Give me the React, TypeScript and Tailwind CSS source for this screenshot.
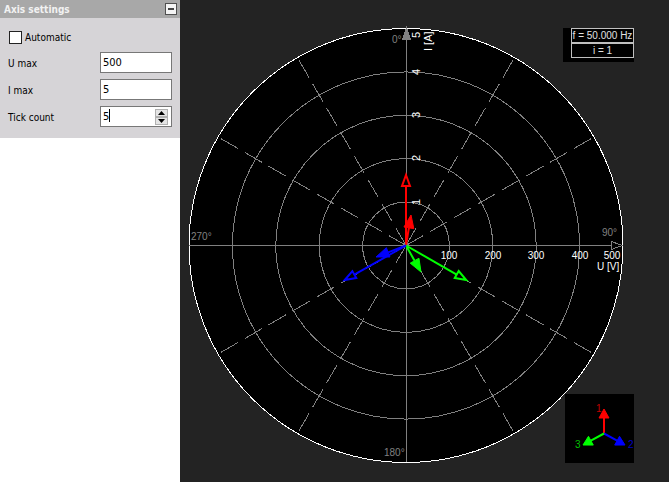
import { useState } from "react";

const CX = 226;
const CY = 245.5;
const RADIUS = 217;
const RINGS = [1, 2, 3, 4];
const SPOKES = [30, 60, 120, 150, 210, 240, 300, 330];

const VOLTAGE_TICKS = [
  { label: "100", x: 269 },
  { label: "200", x: 313 },
  { label: "300", x: 356 },
  { label: "400", x: 400 },
  { label: "500", x: 432 },
];

const CURRENT_TICKS = [
  { label: "1", y: 202 },
  { label: "2", y: 158 },
  { label: "3", y: 115 },
  { label: "4", y: 72 },
  { label: "5", y: 35 },
];

const PHASORS = [
  { id: "U1", x: 226, y: 173, color: "#ff0000", filled: false },
  { id: "I1", x: 231, y: 215, color: "#ff0000", filled: true },
  { id: "U2", x: 288, y: 281, color: "#00ff00", filled: false },
  { id: "I2", x: 241, y: 272, color: "#00ff00", filled: true },
  { id: "U3", x: 163, y: 281, color: "#0000ff", filled: false },
  { id: "I3", x: 196, y: 257, color: "#0000ff", filled: true },
];

type ArrowProps = {
  x1: number;
  y1: number;
  x2: number;
  y2: number;
  color: string;
  filled: boolean;
  head?: number;
};

function Arrow({ x1, y1, x2, y2, color, filled, head = 13 }: ArrowProps) {
  const len = Math.hypot(x2 - x1, y2 - y1);
  const dx = (x2 - x1) / len;
  const dy = (y2 - y1) / len;
  // an outlined head is pulled back so its mitred tip ends on the value
  const inset = filled ? 0 : 2;
  const tx = x2 - dx * inset;
  const ty = y2 - dy * inset;
  const bx = x2 - dx * head;
  const by = y2 - dy * head;
  const half = filled ? 5 : 4;
  return (
    <g stroke={color}>
      <line x1={x1} y1={y1} x2={bx} y2={by} strokeWidth={2} />
      <polygon
        points={`${tx},${ty} ${bx - dy * half},${by + dx * half} ${bx + dy * half},${by - dx * half}`}
        fill={filled ? color : "#000"}
        strokeWidth={filled ? 1 : 2}
      />
    </g>
  );
}

function PhasorChart() {
  return (
    <svg viewBox="0 0 489 482" className="block h-full w-full font-['Liberation_Sans',Arial,sans-serif]" role="img" aria-label="Phasor diagram">
      <g fill="none" stroke="#808080" shapeRendering="crispEdges">
        <circle cx={CX} cy={CY} r={RADIUS} fill="#000" stroke="#fff" />
        {RINGS.map((n) => (
          <circle key={n} cx={CX} cy={CY} r={(RADIUS * n) / 5} />
        ))}
        {SPOKES.map((deg) => {
          const a = (deg * Math.PI) / 180;
          return (
            <line
              key={deg}
              x1={CX + 214 * Math.sin(a)}
              y1={CY - 214 * Math.cos(a)}
              x2={CX}
              y2={CY}
              strokeDasharray="20 7.7"
            />
          );
        })}
        <path d="M226.5 29V462M9 245.5H442" />
        <polygon points="226.5,28 230.5,39.5 222.5,39.5" fill="#808080" />
        <polygon points="442,245.5 431.5,241.5 431.5,249.5" fill="#000" />
      </g>

      {PHASORS.map((p) => (
        <Arrow key={p.id} x1={226} y1={245.5} x2={p.x} y2={p.y} color={p.color} filled={p.filled} />
      ))}

      <g fill="#808080" fontSize={10}>
        <text x={212} y={43}>0°</text>
        <text x={422} y={236}>90°</text>
        <text x={204} y={456}>180°</text>
        <text x={11} y={240}>270°</text>
      </g>

      <g fill="#fff" fontSize={10}>
        {VOLTAGE_TICKS.map((t) => (
          <text key={t.label} textAnchor="middle" x={t.x} y={259}>{t.label}</text>
        ))}
        <text x={417} y={270}>U [V]</text>
      </g>
      <g fill="#fff" fontSize={11}>
        {CURRENT_TICKS.map((t) => (
          <text key={t.label} textAnchor="middle" transform={`translate(240 ${t.y}) rotate(-90)`}>{t.label}</text>
        ))}
        <text transform="translate(252 51) rotate(-90)">I [A]</text>
      </g>
    </svg>
  );
}

function PhaseLegend() {
  return (
    <svg viewBox="0 0 69 69" className="block size-[69px] bg-black font-['Liberation_Sans',Arial,sans-serif]" role="img" aria-label="Phase order">
      <Arrow x1={39} y1={39.5} x2={39} y2={15} color="#ff0000" filled head={9} />
      <Arrow x1={39} y1={39.5} x2={60} y2={51} color="#0000ff" filled head={9} />
      <Arrow x1={39} y1={39.5} x2={18} y2={51} color="#00ff00" filled head={9} />
      <g fontSize={10}>
        <text x={31} y={18} fill="#c00000">1</text>
        <text x={63} y={54} fill="#0000c8">2</text>
        <text x={10} y={54} fill="#00c000">3</text>
      </g>
    </svg>
  );
}

function AxisSettings() {
  const [open, setOpen] = useState(true);
  const [automatic, setAutomatic] = useState(false);
  const [uMax, setUMax] = useState("500");
  const [iMax, setIMax] = useState("5");
  const [ticks, setTicks] = useState(5);
  const field = "h-[21px] w-[72px] border border-[#777] bg-white px-[2px] pb-px text-[11px] outline-none";

  return (
    <section>
      <header className="flex h-[18px] items-center justify-between bg-[#a8a8a8] pr-[3px] pl-1">
        <h2 className="pt-px font-bold text-[#f2f2f2]">Axis settings</h2>
        <button
          type="button"
          aria-label="Collapse"
          onClick={() => setOpen(!open)}
          className="grid size-3 place-items-center border border-[#505050] bg-[#f4f4f4]"
        >
          <span className="h-[2px] w-1.5 bg-[#444]" />
        </button>
      </header>
      {open && (
        <div className="bg-[#d6d4d7] px-2 pt-[13px] pb-[11px]">
          <label className="flex h-[13px] items-center gap-[3px] pl-px">
            <input
              type="checkbox"
              checked={automatic}
              onChange={(e) => setAutomatic(e.target.checked)}
              className="size-[13px] appearance-none border border-[#222] bg-white checked:bg-[#444]"
            />
            <span className="pt-px">Automatic</span>
          </label>
          <div className="mt-2 flex flex-col gap-1.5">
            <div className="flex items-center justify-between">
              <label htmlFor="u-max" className="pt-0.5">U max</label>
              <input id="u-max" className={field} value={uMax} onChange={(e) => setUMax(e.target.value)} />
            </div>
            <div className="flex items-center justify-between">
              <label htmlFor="i-max" className="pt-0.5">I max</label>
              <input id="i-max" className={field} value={iMax} onChange={(e) => setIMax(e.target.value)} />
            </div>
            <div className="flex items-center justify-between">
              <label htmlFor="ticks" className="pt-0.5">Tick count</label>
              <div className="relative">
                <input
                  id="ticks"
                  className={field + " block caret-transparent"}
                  value={ticks}
                  onChange={(e) => setTicks(Number(e.target.value) || 0)}
                />
                <span className="absolute top-[3px] left-[9px] h-[13px] w-px bg-black" />
                <div className="absolute top-[3px] right-1 flex flex-col">
                  <button type="button" aria-label="More ticks" onClick={() => setTicks(ticks + 1)} className="grid h-2 w-[13px] place-items-center border border-[#b0b0b0] bg-[#e4e4e4]">
                    <svg viewBox="0 0 7 4" className="h-1 w-[7px]"><path d="M0 4L3.5 0L7 4Z" /></svg>
                  </button>
                  <button type="button" aria-label="Fewer ticks" onClick={() => setTicks(ticks - 1)} className="grid h-2 w-[13px] place-items-center border border-[#b0b0b0] bg-[#e4e4e4]">
                    <svg viewBox="0 0 7 4" className="h-1 w-[7px]"><path d="M0 0L3.5 4L7 0Z" /></svg>
                  </button>
                </div>
              </div>
            </div>
          </div>
        </div>
      )}
    </section>
  );
}

export default function App() {
  return (
    <div className="flex h-screen bg-[#232323]">
      <aside className="w-[180px] shrink-0 bg-white font-['DejaVu_Sans_Condensed','DejaVu_Sans',sans-serif] text-[10px] leading-3 text-black">
        <AxisSettings />
      </aside>
      <main className="relative min-w-0 flex-1">
        <PhasorChart />
        <div className="absolute top-7 right-[35px] bg-black pb-1 pl-2 font-['Liberation_Sans',Arial,sans-serif] text-[10px] leading-[13px] text-[#e0e0e0]">
          <p className="w-[63px] border border-[#c0c0c0] text-center whitespace-nowrap">f = 50.000 Hz</p>
          <p className="w-[63px] border border-[#c0c0c0] text-center">i = 1</p>
        </div>
        <div className="absolute right-[35px] bottom-[19px]">
          <PhaseLegend />
        </div>
      </main>
    </div>
  );
}
